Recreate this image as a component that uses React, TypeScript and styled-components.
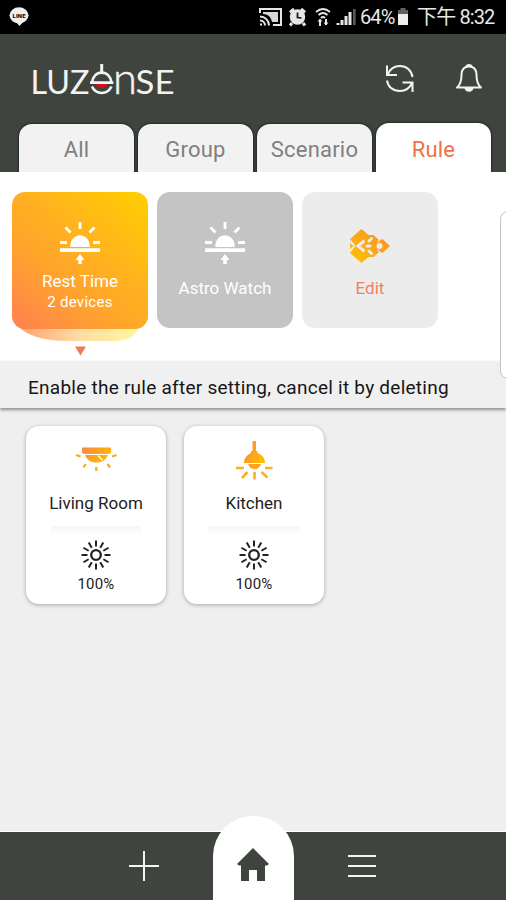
import React from "react";
import styled, { createGlobalStyle } from "styled-components";

const DARK = "#3f453e";

const GlobalStyle = createGlobalStyle`
  * { box-sizing: border-box; }
  body { margin: 0; background: #f0f0f0; }
`;

const Screen = styled.div`
  position: relative;
  display: flex;
  flex-direction: column;
  width: 506px;
  height: 900px;
  overflow: hidden;
  background: #efefef;
  font-family: Roboto, "Noto Sans CJK TC", sans-serif;
  color: #222;
`;

const StatusBar = styled.div`
  display: flex;
  align-items: center;
  justify-content: space-between;
  height: 34px;
  flex: none;
  padding: 0 9px;
  background: #000;
`;

const StatusIcons = styled.div`
  display: flex;
  align-items: center;
  height: 34px;
`;

const StatusText = styled.span<{ $width: number }>`
  width: ${(p) => p.$width}px;
  font-size: 20px;
  line-height: 35px;
  letter-spacing: -0.9px;
  white-space: nowrap;
  color: #e8e8e8;
`;

const Header = styled.header`
  display: flex;
  flex-direction: column;
  justify-content: space-between;
  height: 138px;
  flex: none;
  background: ${DARK};
`;

const TitleRow = styled.div`
  display: flex;
  justify-content: space-between;
  height: 89px;
  padding: 6px 23px 0 30px;
`;

const Actions = styled.div`
  display: flex;
  gap: 40px;
  padding-top: 22px;
`;

const Tabs = styled.nav`
  display: flex;
  align-items: flex-end;
  gap: 4px;
  height: 49px;
  padding-left: 19px;
`;

const Tab = styled.button<{ $active?: boolean }>`
  width: 115px;
  height: ${(p) => (p.$active ? 49 : 48)}px;
  padding: 4px 0 0;
  border: 0;
  border-radius: 13px 13px 0 0;
  background: ${(p) => (p.$active ? "#fff" : "#f2f2f2")};
  box-shadow: 0 0 2px 1px rgba(15, 25, 15, 0.55);
  color: ${(p) => (p.$active ? "#ef7145" : "#808080")};
  font: 400 22px/44px Roboto, sans-serif;
  letter-spacing: 0.2px;
`;

const Rules = styled.section`
  position: relative;
  display: flex;
  align-items: flex-start;
  gap: 9px;
  height: 189px;
  flex: none;
  padding: 20px 12px 0;
  background: #fff;
`;

const RuleSlot = styled.div`
  display: flex;
  flex-direction: column;
  align-items: center;
  width: 136px;
`;

const RuleTile = styled.div<{ $kind: "on" | "off" | "edit" }>`
  position: relative;
  z-index: 1;
  display: flex;
  flex-direction: column;
  align-items: center;
  width: 136px;
  height: ${(p) => (p.$kind === "on" ? 137 : 136)}px;
  padding-top: ${(p) => (p.$kind === "edit" ? 36 : 29)}px;
  border-radius: 13px;
  background: ${(p) =>
    p.$kind === "on"
      ? "linear-gradient(40deg, #ff8052 0%, #ffa32d 35%, #ffb31e 60%, #ffcf00 100%)"
      : p.$kind === "off"
      ? "#c4c4c4"
      : "#ececec"};
  color: ${(p) => (p.$kind === "edit" ? "#f0805f" : "#fff")};
`;

const RuleName = styled.div<{ $top: number }>`
  margin-top: ${(p) => p.$top}px;
  font-size: 17px;
  line-height: 20px;
  letter-spacing: 0;
  white-space: nowrap;
`;

const RuleDetail = styled.div`
  margin-top: 1px;
  font-size: 15px;
  line-height: 21px;
  letter-spacing: 0.3px;
`;

const Glow = styled.svg`
  margin-top: -3px;
`;

const SidePanel = styled.div`
  position: absolute;
  z-index: 3;
  top: 211px;
  right: -12px;
  width: 18px;
  height: 168px;
  border: 1px solid #c4c4c4;
  border-radius: 8px;
  background: #fff;
`;

const Banner = styled.div`
  position: relative;
  height: 47px;
  flex: none;
  padding-left: 28px;
  background: #f0f0f0;
  box-shadow: 0 2px 3px rgba(0, 0, 0, 0.4);
  color: #161616;
  font-size: 19px;
  line-height: 53px;
  letter-spacing: 0.25px;
  white-space: nowrap;
`;

const Devices = styled.main`
  display: flex;
  align-items: flex-start;
  gap: 18px;
  flex: 1;
  padding: 18px 26px;
`;

const DeviceCard = styled.article`
  display: flex;
  flex-direction: column;
  align-items: center;
  width: 140px;
  height: 178px;
  padding-top: 11px;
  border-radius: 13px;
  background: #fff;
  box-shadow: 0 1px 4px rgba(0, 0, 0, 0.3);
`;

const DeviceName = styled.div`
  margin-top: 8px;
  font-size: 17px;
  line-height: 20px;
  letter-spacing: 0;
`;

const Divider = styled.div`
  width: 92px;
  height: 8px;
  margin: 13px 0 5px;
  border-radius: 3px;
  background: linear-gradient(#f5f5f5, #fff);
`;

const Level = styled.div`
  margin-top: 4px;
  font-size: 15px;
  line-height: 18px;
  letter-spacing: 0.2px;
`;

const BottomBar = styled.nav`
  display: flex;
  justify-content: center;
  align-items: flex-end;
  height: 68px;
  flex: none;
  background: ${DARK};
  box-shadow: 0 -1px 0 #fff;
`;

const BarItem = styled.button`
  display: flex;
  justify-content: center;
  align-items: center;
  width: 69px;
  height: 68px;
  margin: 0 34px;
  padding: 0;
  border: 0;
  background: none;
`;

const HomeItem = styled.button`
  display: flex;
  justify-content: center;
  width: 81px;
  height: 84px;
  padding: 32px 0 0;
  border: 0;
  border-radius: 40px 40px 0 0;
  background: #fff;
`;

const Logo = () => (
  <svg width="150" height="72" viewBox="30 40 150 72" fill="#f3f3f3" fontFamily="Lato, sans-serif">
    <text x="30.5" y="94" fontSize="32" textLength="59" lengthAdjust="spacingAndGlyphs">LUZ</text>
    <g fill="none" stroke="#f3f3f3" strokeWidth="2.6">
      <path d="M101.700 64v9" strokeWidth="3" />
      <path d="M90 82.600h23.400M92 82.600c.6-6 4.500-10 9.700-10s9.200 4 9.800 10" />
      <path d="M92 86.500c1.700 4 5.200 6.500 9.700 6.500s8-2.500 9.700-6.500" />
    </g>
    <path d="M96 84h11.500c-1 3-3 4.200-5.700 4.200S97 87 96 84z" fill="#d80e18" />
    <text x="113" y="94" fontSize="44" fontWeight="300" stroke="#f3f3f3" strokeWidth="0.5" textLength="24" lengthAdjust="spacingAndGlyphs">n</text>
    <text x="135.500" y="94" fontSize="32" textLength="39" lengthAdjust="spacingAndGlyphs">SE</text>
  </svg>
);

const LineIcon = () => (
  <svg width="20" height="20" viewBox="0 0 20 20">
    <ellipse cx="10" cy="8.300" rx="9.500" ry="8" fill="#eee" />
    <path d="M6 14l4.500 5L15 14z" fill="#eee" />
    <text x="3.500" y="10.600" fontSize="6" fontWeight="900" fontFamily="Roboto" textLength="13" fill="#111">LINE</text>
  </svg>
);

const StatusGlyphs = () => (
  <svg width="101" height="34" viewBox="0 0 101 34" fill="none" stroke="#e6e6e6" strokeWidth="2">
    <path d="M1 13V9h21v16h-8" />
    <path d="M4 12h15v10h-6c-1-5-4-8-9-8z" fill="#d7d7d7" stroke="none" />
    <path d="M1 16.500a9 9 0 0 1 9 9M1 20.500a5 5 0 0 1 5 5" />
    <path d="M1 23.500h2v2H1z" fill="#e6e6e6" stroke="none" />
    <circle cx="38.500" cy="17" r="7.700" fill="#e6e6e6" stroke="none" />
    <path d="M31 12.500l4-3.500M46 12.500L42 9M33 23l-2 2.500M44 23l2 2.500" strokeWidth="3" />
    <path d="M38.500 12.500v5l4 .5" stroke="#111" strokeWidth="1.700" />
    <path d="M57 12q7-6 14 0M59.500 15q4.500-4 9 0M62 18q2-2 4 0" strokeWidth="1.800" />
    <path d="M61 26v-6M67 19v6" strokeWidth="2" />
    <path d="M58.500 21.500L61 18.500l2.500 3zM64.500 22.500l2.500 3 2.500-3z" fill="#e6e6e6" stroke="none" />
    <path d="M79 25v-2M83 25v-5M87 25v-9M91 25V12" strokeWidth="3" />
    <path d="M95.300 25V9" stroke="#595959" strokeWidth="2.600" />
  </svg>
);

const Battery = () => (
  <svg width="12" height="18" viewBox="0 0 12 18">
    <path d="M3.500 0h5v2H11v4H1V2h2.500z" fill="#626262" />
    <path d="M1 6h10v11H1z" fill="#eee" />
  </svg>
);

const RefreshIcon = () => (
  <svg width="30" height="30" viewBox="0 0 30 30" fill="none" stroke="#f3f3f3" strokeWidth="2">
    <path d="M2 3.500v9.500h10M2.500 12.500C5 7 9.500 4 15 4c6.500 0 11.500 4.500 12.500 11" />
    <path d="M27.500 30v-9.500h-10M27 21c-2.500 5.500-7 8-12 8C8 29 3 25 2 18.500" />
  </svg>
);

const BellIcon = () => (
  <svg width="28" height="30" viewBox="0 0 28 30" fill="none" stroke="#f3f3f3" strokeWidth="2" strokeLinejoin="round">
    <path d="M14 4.500c-5.500 0-7.500 4-7.500 8.500 0 7-1.500 10-4.500 12.500h24c-3-2.500-4.500-5.500-4.500-12.500 0-4.500-2-8.500-7.500-8.500z" />
    <path d="M11.500 4.500c.5-2 4.500-2 5 0" />
    <path d="M10.500 26c.7 3.500 6.300 3.500 7 0z" fill="#f3f3f3" />
  </svg>
);

const SunriseIcon = () => (
  <svg width="42" height="44" viewBox="0 0 42 44" fill="#fff">
    <path d="M1 27.300h40v3.700H1zM11.300 26v-2a9.700 9.700 0 0 1 19.400 0v2z" />
    <path d="M21 1v7M6.500 6.500l5 5M35.500 6.500l-5 5M1 21.500h7M34 21.500h7" stroke="#fff" strokeWidth="2.800" />
    <path d="M21 33l4.500 6h-2.700v4h-3.600v-4h-2.700z" />
  </svg>
);

const EditIcon = () => (
  <svg width="42" height="36" viewBox="0 0 42 36">
    <defs>
      <linearGradient id="edit" x1="0" x2="1" y1="1" y2="0">
        <stop offset="0" stopColor="#ffc400" />
        <stop offset="1" stopColor="#f98b2c" />
      </linearGradient>
    </defs>
    <path
      d="M1 11L12.500 1l7 6h5l6 5.500 3-1.500L41 18l-7.500 7-3-1.500-6 5.500h-5l-7 6L1 25l5.500-7z"
      fill="url(#edit)"
      strokeLinejoin="round"
    />
    <g fill="none" stroke="#ececec" strokeWidth="3" strokeLinecap="round">
      <path d="M14.500 13.500L9 18l5.500 4.500M20 13l2.500-2.500M20 23l2.500 2.500" />
      <path d="M18 18h3" />
    </g>
    <circle cx="30.500" cy="18" r="3" fill="#ececec" />
    <path d="M28.500 14.500l2-2.500M28.500 21.500l2 2.500" stroke="#ececec" strokeWidth="1.200" />
    <path d="M1 15l3.500 3L1 21zM11.500 18l3-2v4z" fill="#ffb11f" />
  </svg>
);

const LampGradient = ({ id }: { id: string }) => (
  <linearGradient id={id} x1="0" x2="1" y1="0" y2="0.5">
    <stop offset="0" stopColor="#f98645" />
    <stop offset="1" stopColor="#ffb900" />
  </linearGradient>
);

const CeilingLamp = () => (
  <svg width="44" height="48" viewBox="0 0 44 48">
    <defs><LampGradient id="ceiling" /></defs>
    <path d="M8 10.500h29v5l-2 1.500H10l-2-1.500zM11 18h23c-2 5-6 7.500-11.500 7.500S13 23 11 18z" fill="url(#ceiling)" />
    <path d="M24 18.500l4.500 4.500" stroke="#fff" strokeWidth="1.500" />
    <path d="M2 18l4.500 1.500M42.500 18L38 19.500M9.500 30.500l2.200-3.500M36 30.500L33.500 27M22.300 30v4" stroke="#f9a72d" strokeWidth="2.300" />
  </svg>
);

const PendantLamp = () => (
  <svg width="44" height="48" viewBox="0 0 44 48">
    <defs><LampGradient id="pendant" /></defs>
    <path d="M20.500 4h3.500v10h1.500v2c4.500 1.500 7.500 5 7.500 10H12c0-5 3-8 7-10v-2h1.500z" fill="url(#pendant)" />
    <path d="M16 27h13c-1 3-3 5-6.500 5S17 30 16 27z" fill="#f9a31e" />
    <path d="M4 31h8M33 31h7.500M10 41l5.500-6M35.500 40.500L29.500 35M22.500 35v7.500" stroke="#ffaf22" strokeWidth="2.600" />
  </svg>
);

const RAYS = Array.from({ length: 12 }, (_, i) => i * 30);

const BrightnessIcon = () => (
  <svg width="32" height="32" viewBox="0 0 32 32" fill="none" stroke="#222" strokeWidth="2.300">
    <circle cx="16" cy="16" r="4.800" />
    {RAYS.map((angle) => (
      <path key={angle} d="M16 1.500v6" transform={`rotate(${angle} 16 16)`} strokeWidth="2" />
    ))}
  </svg>
);

const devices = [
  { name: "Living Room", icon: <CeilingLamp />, level: "100%" },
  { name: "Kitchen", icon: <PendantLamp />, level: "100%" },
];

export default function App() {
  return (
    <>
      <GlobalStyle />
      <Screen>
        <StatusBar>
          <LineIcon />
          <StatusIcons>
            <StatusGlyphs />
            <StatusText $width={37}>64%</StatusText>
            <Battery />
            <StatusText $width={88}>&nbsp;&nbsp;下午 8:32</StatusText>
          </StatusIcons>
        </StatusBar>
        <Header>
          <TitleRow>
            <Logo />
            <Actions>
              <RefreshIcon />
              <BellIcon />
            </Actions>
          </TitleRow>
          <Tabs>
            <Tab>All</Tab>
            <Tab>Group</Tab>
            <Tab>Scenario</Tab>
            <Tab $active>Rule</Tab>
          </Tabs>
        </Header>
        <Rules>
          <RuleSlot>
            <RuleTile $kind="on">
              <SunriseIcon />
              <RuleName $top={6}>Rest Time</RuleName>
              <RuleDetail>2 devices</RuleDetail>
            </RuleTile>
            <Glow width="124" height="36" viewBox="0 0 124 36">
              <defs>
                <linearGradient id="glow">
                  <stop offset="0" stopColor="#ffa16d" />
                  <stop offset="0.5" stopColor="#ffdca5" />
                  <stop offset="1" stopColor="#fff89c" />
                </linearGradient>
              </defs>
              <path d="M0 0h122c-5 10-10 14-25 15H50C25 15 8 9 0 0z" fill="url(#glow)" />
              <path d="M57 20.500h11l-5.500 9z" fill="#ef7a57" />
            </Glow>
          </RuleSlot>
          <RuleTile $kind="off">
            <SunriseIcon />
            <RuleName $top={13}>Astro Watch</RuleName>
          </RuleTile>
          <RuleTile $kind="edit">
            <EditIcon />
            <RuleName $top={14}>Edit</RuleName>
          </RuleTile>
        </Rules>
        <Banner>Enable the rule after setting, cancel it by deleting</Banner>
        <Devices>
          {devices.map((device) => (
            <DeviceCard key={device.name}>
              {device.icon}
              <DeviceName>{device.name}</DeviceName>
              <Divider />
              <BrightnessIcon />
              <Level>{device.level}</Level>
            </DeviceCard>
          ))}
        </Devices>
        <BottomBar>
          <BarItem>
            <svg width="30" height="30" viewBox="0 0 30 30" stroke="#f4f4f4" strokeWidth="2">
              <path d="M15 0v30M0 15h30" />
            </svg>
          </BarItem>
          <HomeItem>
            <svg width="32" height="34" viewBox="0 0 32 34" fill={DARK}>
              <path d="M16 0l16 16-2 1.500h-2V33h-8V22h-8v11H4V17.500H2L0 16z" />
            </svg>
          </HomeItem>
          <BarItem>
            <svg width="28" height="26" viewBox="0 0 28 26" stroke="#f4f4f4" strokeWidth="2">
              <path d="M0 3h28M0 13h28M0 23h28" />
            </svg>
          </BarItem>
        </BottomBar>
        <SidePanel />
      </Screen>
    </>
  );
}
